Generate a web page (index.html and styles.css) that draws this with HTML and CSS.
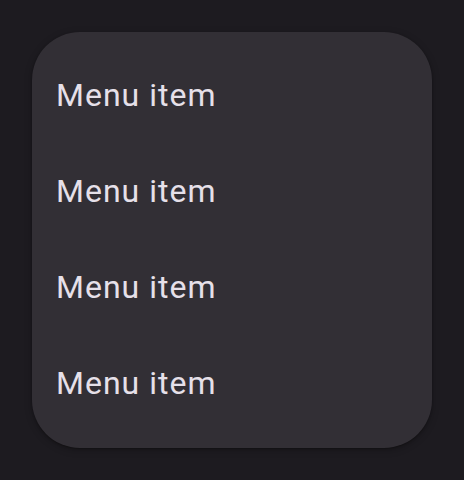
FILE: index.html
```html
<!DOCTYPE html>
<html lang="en">
<head>
    <meta charset="UTF-8">
    <meta name="viewport" content="width=device-width, initial-scale=1.0">
    <title>Menu</title>
    <link rel="stylesheet" href="styles.css">
</head>
<body>
    <!-- Menu -->
    <ul class="menu">
        <li class="menu-item">Menu item</li>
        <li class="menu-item">Menu item</li>
        <li class="menu-item">Menu item</li>
        <li class="menu-item">Menu item</li>
    </ul>
</body>
</html>
```

FILE: styles.css
```css
body {
    margin: 0;
    padding: 32px;
    background-color: #1d1b20;
    font-family: Roboto, "Noto Sans", sans-serif;
}

.menu {
    list-style: none;
    margin: 0;
    padding: 16px 0;
    width: 400px;
    background-color: #322f35;
    border-radius: 48px;
    box-shadow: 0 2px 6px 2px rgba(0, 0, 0, 0.15), 0 1px 2px rgba(0, 0, 0, 0.3);
}

.menu-item {
    box-sizing: border-box;
    display: flex;
    align-items: center;
    height: 96px;
    padding: 0 24px 2px;
    color: #e6e0e9;
    font-size: 32px;
    letter-spacing: 1px;
}
```
